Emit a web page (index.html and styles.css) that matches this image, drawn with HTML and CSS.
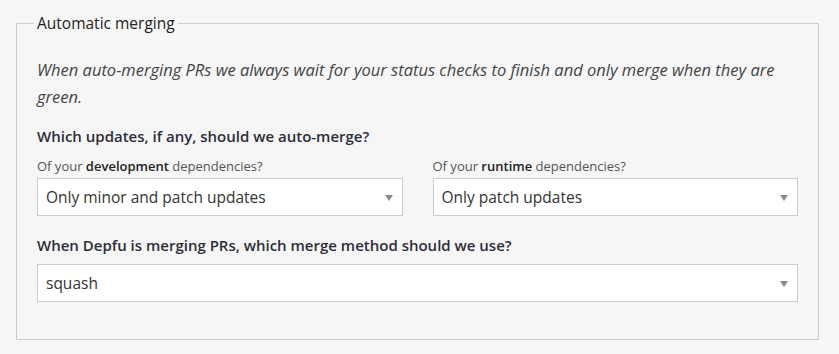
FILE: index.html
```html
<!DOCTYPE html>
<html lang="en">
<head>
  <meta charset="UTF-8" />
  <title>Automatic merging</title>
  <link rel="stylesheet" href="styles.css">
</head>
<body>

<form class="settings">
  <fieldset class="merge-box">
    <legend>Automatic merging</legend>
    <p class="hint">When auto-merging PRs we always wait for your status checks to finish and only merge when they are green.</p>

    <h3>Which updates, if any, should we auto-merge?</h3>
    <div class="row">
      <div class="field">
        <label for="dev">Of your <strong>development</strong> dependencies?</label>
        <div class="select-wrap">
          <select id="dev">
            <option>Only minor and patch updates</option>
          </select>
        </div>
      </div>
      <div class="field">
        <label for="runtime">Of your <strong>runtime</strong> dependencies?</label>
        <div class="select-wrap">
          <select id="runtime">
            <option>Only patch updates</option>
          </select>
        </div>
      </div>
    </div>

    <h3>When Depfu is merging PRs, which merge method should we use?</h3>
    <div class="select-wrap">
      <select id="method">
        <option>squash</option>
      </select>
    </div>
  </fieldset>
</form>

</body>
</html>
```

FILE: styles.css
```css
* {
  box-sizing: border-box;
  font-family: 'Open Sans', Lato, sans-serif;
}

body {
  margin: 0;
  padding: 13px 20px 15px 16px;
  background: #f6f6f6;
  color: #2d2d3a;
}

.merge-box {
  margin: 0;
  padding: 0 20px 37px 20px;
  border: 1px solid #cccccc;
}

.merge-box legend {
  padding: 0 3px;
  margin-left: -3px;
  font-size: 15.5px;
  line-height: 21px;
  color: #222;
}

.hint {
  margin: 22px 0 15px;
  font-size: 16.5px;
  font-style: italic;
  line-height: 27px;
  color: #444;
}

.merge-box h3 {
  margin: 0 0 8px;
  font-size: 15px;
  font-weight: 600;
  line-height: 22px;
}

.row {
  display: flex;
  gap: 30px;
  margin-bottom: 18px;
}

.field {
  flex: 1;
}

.field label {
  display: block;
  margin: 1px 0 2px;
  font-size: 13px;
  line-height: 20px;
  color: #555;
}

.field label strong {
  color: #222;
  font-weight: 600;
}

.select-wrap {
  position: relative;
}

.select-wrap::after {
  content: "";
  position: absolute;
  right: 10px;
  top: 17px;
  border-left: 4px solid transparent;
  border-right: 4px solid transparent;
  border-top: 6px solid #8a8a8a;
  pointer-events: none;
}

.select-wrap select {
  width: 100%;
  height: 38px;
  padding: 0 8px;
  font-size: 15.5px;
  color: #333;
  background: #fff;
  border: 1px solid #cccccc;
  border-radius: 0;
  appearance: none;
  -webkit-appearance: none;
}
```
